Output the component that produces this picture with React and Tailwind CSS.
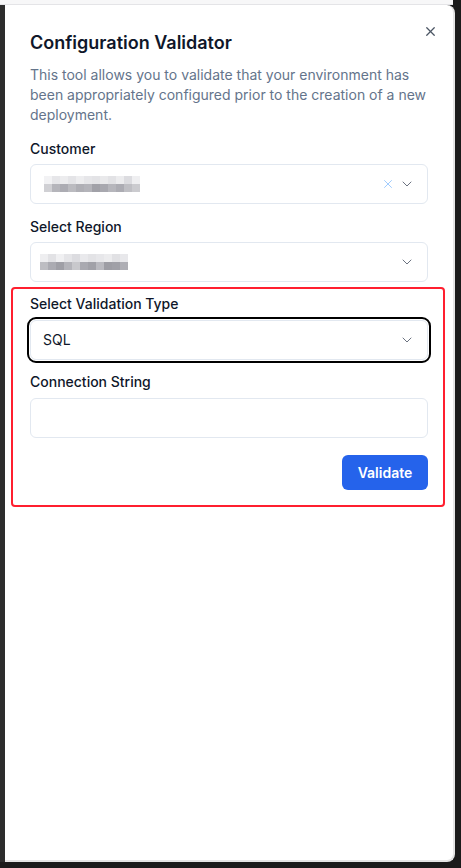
import { X, ChevronDown } from 'lucide-react';

const customerBlur = [
  ['bg-[#f2f2f4]', 'bg-[#e6e6e9]', 'bg-[#ececee]', 'bg-[#e4e4e7]', 'bg-[#ededef]', 'bg-[#e6e6e9]', 'bg-[#e3e3e6]', 'bg-[#e9e9eb]', 'bg-[#e2e2e5]', 'bg-[#ececee]', 'bg-[#dcdce0]', 'bg-[#efeff1]'],
  ['bg-[#d0d0d4]', 'bg-[#b5b5bb]', 'bg-[#acacb3]', 'bg-[#bbbbc0]', 'bg-[#afafb5]', 'bg-[#b4b4ba]', 'bg-[#a1a1a8]', 'bg-[#a8a8af]', 'bg-[#b6b6bc]', 'bg-[#acacb3]', 'bg-[#bfbfc4]', 'bg-[#cbcbcf]'],
];

const regionBlur = [
  ['bg-[#eeeef0]', 'bg-[#e2e2e5]', 'bg-[#f0f0f2]', 'bg-[#e5e5e8]', 'bg-[#dcdce0]', 'bg-[#e9e9ec]', 'bg-[#e3e3e6]', 'bg-[#e7e7ea]', 'bg-[#ececee]', 'bg-[#e1e1e4]', 'bg-[#e8e8eb]'],
  ['bg-[#bdbdc2]', 'bg-[#ababb2]', 'bg-[#9f9fa6]', 'bg-[#b4b4ba]', 'bg-[#c8c8cc]', 'bg-[#a9a9b0]', 'bg-[#a1a1a8]', 'bg-[#babac0]', 'bg-[#9d9da4]', 'bg-[#a0a0a7]', 'bg-[#aeaeb4]'],
];

function Blur({ rows }) {
  return (
    <div className="flex flex-col">
      {rows.map((row, i) => (
        <div key={i} className="flex">
          {row.map((c, j) => (
            <div key={j} className={`h-[8px] w-[8px] ${c}`} />
          ))}
        </div>
      ))}
    </div>
  );
}

function Field({ label, children, className = '' }) {
  return (
    <div className={className}>
      <label className="block text-sm leading-5 font-medium text-[#0f172a]">{label}</label>
      {children}
    </div>
  );
}

export default function App() {
  return (
    <div className="w-[461px] h-[868px] bg-[#1b1b1b] flex flex-col overflow-hidden font-['Inter',sans-serif]">
      <div className="h-[5px] w-[453px] bg-[#f7f7f8] border-b border-[#e4e4e7] shrink-0" />
      <div className="flex h-[857px] shrink-0">
        <div className="w-[5px] bg-[#2d2d2d] shrink-0" />
        <div className="relative w-[450px] bg-white rounded-r-lg border-r-2 border-b-2 border-[#e5e5e5] px-[25px] pt-[24px]">
          <button className="absolute right-[15px] top-[19px] text-[#4b5563]">
            <X size={15} strokeWidth={2} />
          </button>
          <h2 className="text-lg leading-7 font-semibold text-[#0f172a]">Configuration Validator</h2>
          <p className="mt-2 text-sm leading-5 text-[#64748b]">
            This tool allows you to validate that your environment has been appropriately configured prior to the creation of a new deployment.
          </p>

          <Field label="Customer" className="mt-[14px]">
            <div className="mt-[5px] h-[40px] rounded-md border border-[#e2e8f0] flex items-center pl-[13px] pr-[12px]">
              <div className="flex-1 flex">
                <Blur rows={customerBlur} />
              </div>
              <X size={14} strokeWidth={1.5} className="text-[#93c5fd] mr-[4px]" />
              <ChevronDown size={16} strokeWidth={1.5} className="text-[#6b7280]" />
            </div>
          </Field>

          <Field label="Select Region" className="mt-[13px]">
            <div className="mt-[5px] h-[40px] rounded-md border border-[#e2e8f0] flex items-center pl-[9px] pr-[12px]">
              <div className="flex-1 flex">
                <Blur rows={regionBlur} />
              </div>
              <ChevronDown size={16} strokeWidth={1.5} className="text-[#6b7280]" />
            </div>
          </Field>

          <div className="mt-[5px] -ml-[19px] -mr-[17px] border-2 border-[#ff1f2f] rounded-[4px] pl-[17px] pr-[15px] pt-[5px] pb-[15px]">
            <Field label="Select Validation Type">
              <div className="mt-[6px] h-[40px] rounded-md border border-[#e2e8f0] outline-2 outline-offset-1 outline-black flex items-center pl-[12px] pr-[12px]">
                <span className="flex-1 text-sm text-[#0f172a]">SQL</span>
                <ChevronDown size={16} strokeWidth={1.5} className="text-[#6b7280]" />
              </div>
            </Field>

            <Field label="Connection String" className="mt-[12px]">
              <input className="mt-[6px] block w-full h-[40px] rounded-md border border-[#e2e8f0] px-3 text-sm outline-none" />
            </Field>

            <div className="mt-[17px] flex justify-end">
              <button className="h-[35px] w-[86px] rounded-md bg-[#2563eb] text-white text-sm font-semibold">Validate</button>
            </div>
          </div>
        </div>
      </div>
    </div>
  );
}
